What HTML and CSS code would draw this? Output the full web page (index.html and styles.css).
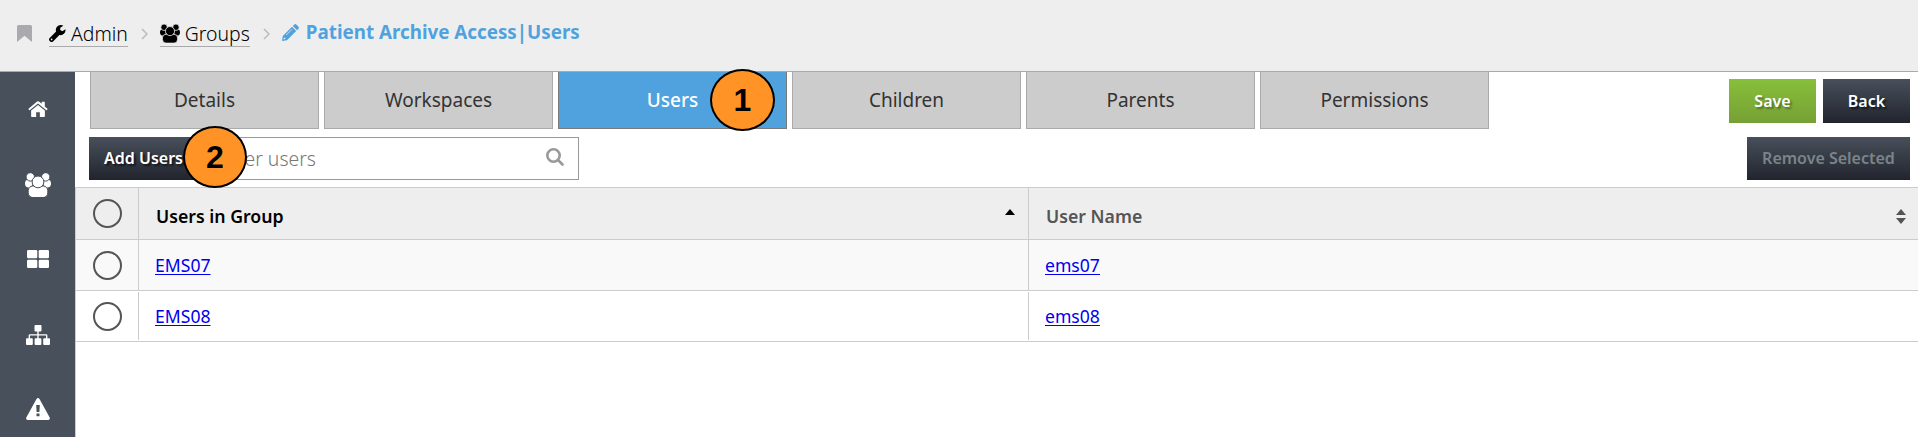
FILE: index.html
```
<!DOCTYPE html>
<html lang="en">
<head>
<meta charset="utf-8">
<title>Patient Archive Access | Users</title>
<link rel="stylesheet" href="styles.css">
</head>
<body>
<svg class="sprite" aria-hidden="true">
  <symbol id="people" viewBox="0 0 26 24">
    <ellipse cx="3.800" cy="10.600" rx="3.800" ry="4"/><ellipse cx="22.200" cy="10.600" rx="3.800" ry="4"/>
    <g class="outlined">
      <circle cx="5.300" cy="3.900" r="4.200"/><circle cx="20.700" cy="3.900" r="4.200"/>
      <rect x="3.200" y="13" width="19.600" height="11.500" rx="4.600"/>
      <circle cx="13" cy="8.900" r="5.900"/>
    </g>
  </symbol>
</svg>
<header class="topbar">
  <svg class="bookmark" viewBox="0 0 15 17"><path d="M1.500 0H13.500Q15 0 15 1.500V17L7.500 10.800L0 17V1.500Q0 0 1.500 0Z"/></svg>
  <a class="crumb"><svg class="wrench" viewBox="0 0 18 18"><path d="M17.400 4.600L14.100 6.500L11.900 5.300V2.800L15.200.800Q14 0 12.500 0A5.300 5.300 0 0 0 7.500 7L.700 13.700Q0 14.400 0 15.300T.700 16.900L1.200 17.400Q2 18 2.800 18T4.300 17.400L11 10.600A5.300 5.300 0 0 0 17.400 4.600ZM2.800 16.200A.900.900 0 1 1 2.800 14.400A.900.900 0 0 1 2.800 16.200Z"/></svg>Admin</a>
  <svg class="chevron" viewBox="0 0 7 12"><path d="M1 1L6 6L1 11"/></svg>
  <a class="crumb"><svg class="group"><use href="#people"/></svg>Groups</a>
  <svg class="chevron" viewBox="0 0 7 12"><path d="M1 1L6 6L1 11"/></svg>
  <span class="current"><svg class="pencil" viewBox="0 0 17 17"><path fill-rule="evenodd" d="M12.300.500Q13.300-.400 14.300.500L16.500 2.700Q17.400 3.700 16.500 4.700L15 6.200L10.800 2ZM10 2.800L14.200 7L5 16.200L0 17L.800 12ZM1.900 13.700L1.500 15.500L3.300 15.100V13.700ZM4.500 11.200L10.400 5.300L10 4.900L4.100 10.800Z"/></svg>Patient Archive Access|Users</span>
</header>
<div class="shell">
  <nav class="sidebar">
    <svg class="nav-icon" viewBox="0 0 24 24"><path d="M12 7.500L19.500 13.700V20Q19.500 20.800 18.700 20.800H14V15.600H10V20.800H5.300Q4.500 20.800 4.500 20V13.700Z"/><path d="M11 3.900Q12 3.100 13 3.900L16 6.400V4.400Q16 4 16.400 4H19Q19.400 4 19.400 4.400V9.200L22.300 11.600Q22.700 11.900 22.400 12.300L21.600 13.200Q21.200 13.600 20.800 13.200L12 5.900L3.200 13.200Q2.800 13.600 2.400 13.200L1.600 12.300Q1.300 11.900 1.700 11.600Z"/></svg>
    <svg class="nav-icon nav-people"><use href="#people"/></svg>
    <svg class="nav-icon nav-grid" viewBox="0 0 22 18"><rect width="10.300" height="8.300" rx="1.300"/><rect x="11.700" width="10.300" height="8.300" rx="1.300"/><rect y="9.700" width="10.300" height="8.300" rx="1.300"/><rect x="11.700" y="9.700" width="10.300" height="8.300" rx="1.300"/></svg>
    <svg class="nav-icon nav-tree" viewBox="0 0 24 20"><path d="M9.500 0H14.500Q15.500 0 15.500 1V5.500Q15.500 6.500 14.500 6.500H12.700V9.200H20Q21.400 9.200 21.400 10.600V13.300H23Q24 13.300 24 14.300V19Q24 20 23 20H18.200Q17.200 20 17.200 19V14.300Q17.200 13.300 18.200 13.300H20V10.600H12.700V13.300H14.400Q15.400 13.300 15.400 14.300V19Q15.400 20 14.400 20H9.600Q8.600 20 8.600 19V14.300Q8.600 13.300 9.600 13.300H11.300V10.600H4V13.300H5.800Q6.800 13.300 6.800 14.300V19Q6.800 20 5.800 20H1Q0 20 0 19V14.300Q0 13.300 1 13.300H2.600V10.600Q2.600 9.200 4 9.200H11.300V6.500H9.500Q8.500 6.500 8.500 5.500V1Q8.500 0 9.500 0Z"/></svg>
    <svg class="nav-icon" viewBox="0 0 24 22"><path fill-rule="evenodd" d="M10.500.900Q12-.900 13.500.900L23.700 19.600Q24.400 21.500 22.300 22H1.700Q-.400 21.500.300 19.600ZM10.200 7L10.600 14H13.400L13.800 7ZM10.500 15.500V18.300H13.500V15.500Z"/></svg>
  </nav>
  <main class="content">
    <div class="tabrow">
      <div class="tabs">
        <a class="tab">Details</a><a class="tab">Workspaces</a>
        <a class="tab active">Users<span class="callout one">1</span></a>
        <a class="tab">Children</a><a class="tab">Parents</a><a class="tab">Permissions</a>
      </div>
      <div class="actions"><button class="btn save">Save</button><button class="btn back">Back</button></div>
    </div>
    <div class="toolbar">
      <button class="btn add">Add Users<span class="callout two">2</span></button>
      <div class="search"><span>Filter users</span><svg class="glass" viewBox="0 0 18 18"><circle cx="7.500" cy="7.500" r="6.200"/><path d="M12 12L16.500 16.500"/></svg></div>
      <button class="btn remove">Remove Selected</button>
    </div>
    <div class="grid">
      <div class="row head">
        <div class="pick"><i class="ring"></i></div>
        <div class="cell sorted">Users in Group<i class="up"></i></div>
        <div class="cell">User Name<span class="sort"><i class="up"></i><i class="down"></i></span></div>
      </div>
      <div class="row odd"><div class="pick"><i class="ring"></i></div><div class="cell"><a href="#">EMS07</a></div><div class="cell"><a href="#">ems07</a></div></div>
      <div class="row even"><div class="pick"><i class="ring"></i></div><div class="cell"><a href="#">EMS08</a></div><div class="cell"><a href="#">ems08</a></div></div>
    </div>
  </main>
</div>
</body>
</html>
```
FILE: styles.css
```
* { box-sizing: border-box; }
body { margin: 0; height: 437px; overflow: hidden; background: #fff; color: #333; font-family: "Noto Sans", "Open Sans", sans-serif; font-size: 18px; }
svg { flex: none; fill: currentColor; }
.sprite { display: none; }
.outlined { stroke: var(--gap); stroke-width: 1; }
.topbar { --gap: #eee; display: flex; align-items: flex-start; height: 72px; padding: 20px 0 0 17px; background: #eee; border-bottom: 1px solid #aaa; color: #000; font-size: 18.8px; }
.bookmark { width: 15px; height: 17px; margin: 5px 17px 0 0; color: #aaaaae; }
.crumb { display: flex; align-items: center; height: 27px; border-bottom: 1px solid #aaa; line-height: 25px; font-size: 19.4px; font-weight: 300; }
.wrench { width: 17px; height: 17px; margin-right: 5px; }
.group { width: 20px; height: 19px; margin-right: 5px; }
.chevron { width: 7px; height: 12px; margin: 8px 12px 0 13px; fill: none; stroke: #bbb; stroke-width: 1.5; }
.current { display: flex; align-items: center; height: 26px; line-height: 25px; padding-bottom: 1px; color: #4fa2de; font-weight: 700; }
.pencil { width: 17px; height: 17px; margin-right: 7px; }
.shell { display: flex; height: 365px; }
.sidebar { --gap: #48505b; display: flex; flex-direction: column; align-items: center; gap: 53px; flex: none; width: 75px; padding-top: 26px; background: #48505b; color: #fff; }
.nav-icon { width: 24px; height: 22px; }
.nav-people { width: 26px; height: 24px; }
.nav-grid { height: 18px; width: 22px; }
.nav-tree { height: 20px; margin-top: 4px; }
.content { flex: 1; display: flex; flex-direction: column; min-width: 0; }
.tabrow { display: flex; justify-content: space-between; height: 65px; padding: 0 8px 0 15px; }
.tabs { display: flex; gap: 5px; }
.tab { position: relative; width: 229px; height: 57px; border: 1px solid #aaa; border-top: 0; background: #ccc; font-size: 19px; line-height: 56px; text-align: center; }
.active { border-color: #7a7a7a; background: #4fa2de; color: #fff; font-weight: 500; }
.actions { display: flex; gap: 7px; padding-top: 7px; }
.btn { position: relative; height: 43px; padding: 0; border: 0; background: linear-gradient(#48505b, #21242d); color: #fff; font: 600 16px/41px "Noto Sans", sans-serif; text-shadow: 2px 2px 2px rgba(0,0,0,.6); }
.save, .back { width: 87px; height: 44px; }
.save { background: linear-gradient(#87bf3a, #76a035); line-height: 45px; text-shadow: 2px 2px 2px rgba(0,0,0,.35); }
.toolbar { display: flex; height: 50px; padding: 0 8px 0 14px; }
.add { width: 109px; text-align: left; padding-left: 15px; }
.search { display: flex; align-items: center; justify-content: space-between; width: 375px; height: 43px; margin-left: 6px; padding: 0 14px 0 14px; border: 1px solid #999; color: #777; font-size: 19.4px; font-weight: 300; }
.glass { width: 18px; height: 18px; fill: none; stroke: #999; stroke-width: 2.6; stroke-linecap: round; margin-bottom: 3px; }
.remove { width: 163px; margin-left: auto; color: #7c848a; text-shadow: none; }
.callout { position: absolute; z-index: 2; width: 65px; height: 62px; border: 2px solid #000; border-radius: 50%; background: #ff9326; color: #000; font: 700 32px/58px "Liberation Sans", Arial, sans-serif; text-align: center; text-shadow: none; }
.one { left: 151px; top: -3px; }
.two { left: 94px; top: -11px; width: 64px; }
.grid { flex: 1; border-left: 1px solid #ccc; border-top: 1px solid #ccc; }
.row { display: grid; grid-template-columns: 62px 890px 1fr; height: 51px; border-bottom: 1px solid #ccc; }
.head { height: 52px; background: #eee; color: #555; font-weight: 600; }
.odd { background: #f9f9f9; }
.even { padding: 1px 0; }
.pick, .cell { display: flex; align-items: center; border-right: 1px solid #ccc; }
.row { grid-template-columns: 63px 890px 1fr; }
.cell:last-child { border-right: 0; }
.pick { padding-left: 17px; }
.head .pick { padding-bottom: 1px; }
.ring { width: 29px; height: 29px; border: 2px solid #555; border-radius: 50%; }
.cell { padding-left: 16px; font-size: 17.6px; justify-content: space-between; }
.cell a { color: #00e; text-underline-offset: 2px; }
.head .cell { padding: 5px 12px 0 17px; font-size: 17.7px; }
.up, .down { display: block; border: 5.500px solid transparent; border-top-width: 0; border-bottom: 6px solid currentColor; }
.head .sorted { color: #000; padding-right: 13px; }
.sorted .up { margin-bottom: 9px; }
.down { border-bottom-width: 0; border-top: 6px solid currentColor; margin-top: 3px; }
```
